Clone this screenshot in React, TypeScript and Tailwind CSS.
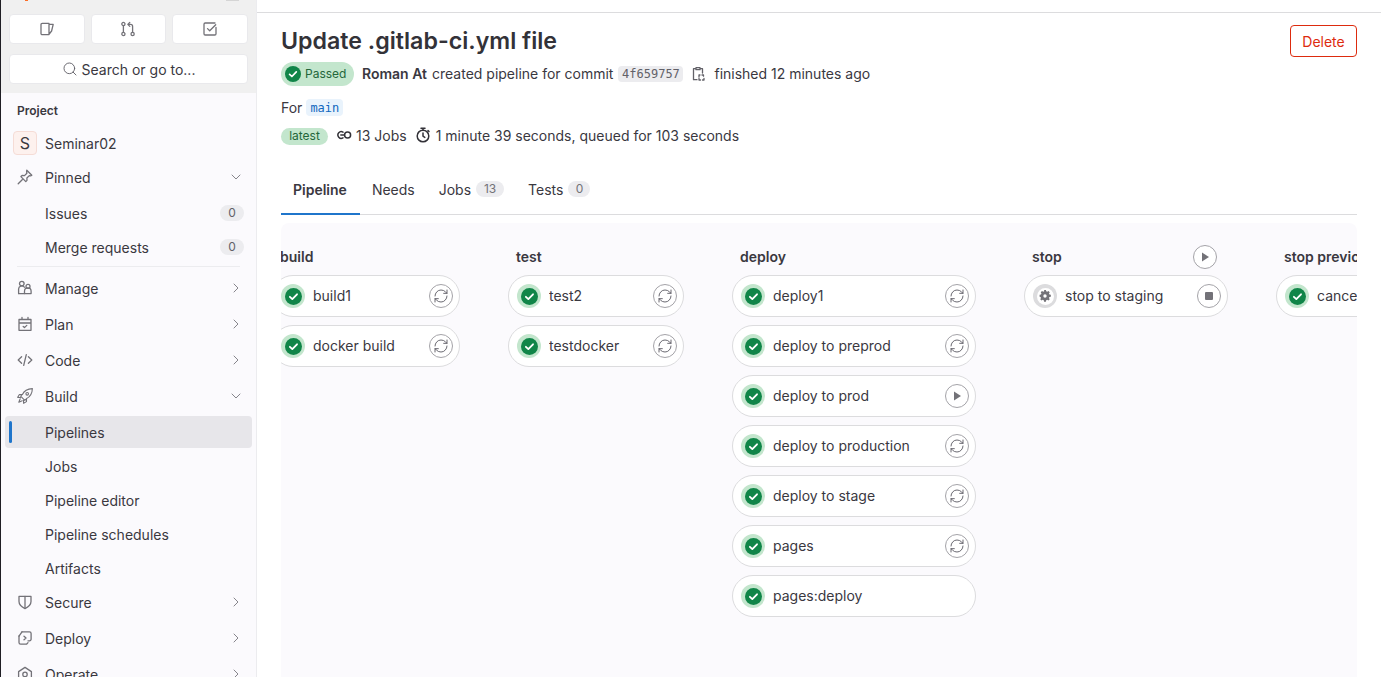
import { ReactNode } from "react";
import { ChevronDown, ChevronRight, RefreshCw, Search } from "lucide-react";

const Icon = ({ children, size = 16, className = "text-[#737278]" }: { children: ReactNode; size?: number; className?: string }) => (
  <svg width={size} height={size} viewBox="0 0 16 16" fill="none" stroke="currentColor" strokeWidth="1.3" strokeLinecap="round" strokeLinejoin="round" className={`shrink-0 ${className}`}>
    {children}
  </svg>
);

const StatusSuccess = ({ size = 17 }: { size?: number }) => (
  <svg width={size} height={size} viewBox="0 0 16 16" className="shrink-0">
    <circle cx="8" cy="8" r="8" fill="#108548" />
    <path d="M4.6 8.3l2.3 2.2 4.4-4.6" fill="none" stroke="#fff" strokeWidth="1.7" strokeLinecap="round" strokeLinejoin="round" />
  </svg>
);

const ActionButton = ({ kind }: { kind: "retry" | "play" | "stop" }) => (
  <button className="w-6 h-6 rounded-full border border-[#a4a3a8] bg-white flex items-center justify-center shrink-0 text-[#737278]">
    {kind === "retry" && <RefreshCw size={16} strokeWidth={1.4} className="text-[#5f5e66]" />}
    {kind === "play" && (
      <svg width="12" height="12" viewBox="0 0 12 12">
        <path d="M3 1.600v8.800L10 6z" fill="currentColor" />
      </svg>
    )}
    {kind === "stop" && <span className="w-2 h-2 rounded-[1px] bg-[#737278]" />}
  </button>
);

type Job = { name: string; action?: "retry" | "play" | "stop"; status?: "success" | "manual" };

const JobPill = ({ job }: { job: Job }) => (
  <div className="h-[42px] rounded-[21px] border border-[#dcdcde] bg-white flex items-center pl-2 pr-[6px]">
    {job.status === "manual" ? (
      <span className="w-6 h-6 rounded-full bg-[#dcdcde] flex items-center justify-center shrink-0">
        <span className="w-[17px] h-[17px] rounded-full bg-white flex items-center justify-center">
          <svg width="12" height="12" viewBox="0 0 12 12">
            <path d="M5 .8h2l.3 1.500 1.100.5 1.300-.8 1.400 1.400-.8 1.300.5 1.100 1.500.3v2l-1.500.3-.5 1.100.8 1.300-1.400 1.400-1.300-.8-1.100.5-.3 1.500H5l-.3-1.500-1.100-.5-1.300.8-1.400-1.400.8-1.300-.5-1.100L.2 8V6l1.500-.3.5-1.100-.8-1.300 1.400-1.400 1.300.8 1.100-.5z" transform="translate(.4 -.8) scale(.93)" fill="#737278" />
            <circle cx="6" cy="6" r="1.700" fill="#fff" />
          </svg>
        </span>
      </span>
    ) : (
      <span className="w-6 h-6 rounded-full bg-[#c3e6cd] flex items-center justify-center shrink-0">
        <StatusSuccess />
      </span>
    )}
    <span className="ml-2 pb-[2px] text-[14px] text-[#3a383f] whitespace-nowrap flex-1 overflow-hidden">{job.name}</span>
    {job.action && <ActionButton kind={job.action} />}
  </div>
);

const stages: { title: string; width: string; headAction?: boolean; jobs: Job[] }[] = [
  { title: "build", width: "w-[188px] -ml-[9px]", jobs: [{ name: "build1", action: "retry" }, { name: "docker build", action: "retry" }] },
  { title: "test", width: "w-[176px]", jobs: [{ name: "test2", action: "retry" }, { name: "testdocker", action: "retry" }] },
  {
    title: "deploy",
    width: "w-[244px]",
    jobs: [
      { name: "deploy1", action: "retry" },
      { name: "deploy to preprod", action: "retry" },
      { name: "deploy to prod", action: "play" },
      { name: "deploy to production", action: "retry" },
      { name: "deploy to stage", action: "retry" },
      { name: "pages", action: "retry" },
      { name: "pages:deploy" },
    ],
  },
  { title: "stop", width: "w-[204px]", headAction: true, jobs: [{ name: "stop to staging", action: "stop", status: "manual" }] },
  { title: "stop previous", width: "w-[204px]", jobs: [{ name: "cancel previous", action: "retry" }] },
];

const navIcons: Record<string, ReactNode> = {
  pin: (
    <Icon>
      <path d="M9.800 1.200l5 5-1.200.7-1.300-.3-2.400 2.400.1 2.400-1.200 1.200-4.900-5 1.200-1.100 2.400.1 2.400-2.400-.3-1.400zM5.200 10.800L1.200 14.800" />
    </Icon>
  ),
  manage: (
    <Icon>
      <circle cx="4.800" cy="3.600" r="2.300" />
      <path d="M1.600 13.600V9a3.200 3.200 0 0 1 5.800-1.800" />
      <path d="M1.600 13.600h5.900" />
      <circle cx="11" cy="6.400" r="2" />
      <path d="M7.500 13.600v-2.400a3.200 3.200 0 0 1 6.600 0v2.400z" />
    </Icon>
  ),
  plan: (
    <Icon>
      <path d="M2 3.500h12v10.800H2zM2 7h12M5 1.400v2M11 1.400v2" />
      <path d="M6.200 10.400l1.300 1.200 2.300-2.200" />
    </Icon>
  ),
  code: (
    <Icon>
      <path d="M4.600 4.800L1.200 8l3.400 3.200M11.400 4.800L14.800 8l-3.400 3.200M9.300 2.600L6.700 13.400" />
    </Icon>
  ),
  build: (
    <Icon>
      <path d="M15.400.6c-4.800.2-8.300 2.200-10 5.800L3.600 8.200l4.200 4.200 1.800-1.800c3.600-1.700 5.600-5.200 5.800-10z" strokeWidth="1.100" />
      <circle cx="10.200" cy="5.800" r="1.300" strokeWidth="1.100" />
      <path d="M5 6.500H2.400L.7 9.400l3 .1M9.500 11v2.600l-2.900 1.700-.1-3M3.200 10.800L1.800 14.200l3.400-1.400" strokeWidth="1.100" />
    </Icon>
  ),
  secure: (
    <Icon>
      <path d="M2 2.400h12v5.200c0 3-2.400 5.300-6 7-3.600-1.700-6-4-6-7z" />
      <path d="M8 2.400v12" />
    </Icon>
  ),
  deploy: (
    <Icon>
      <path d="M5 1.800h7.500a1.600 1.600 0 0 1 1.600 1.600v5.800a1.600 1.600 0 0 1-1.600 1.600H11M2 6v6.600a1.600 1.600 0 0 0 1.600 1.600h5.900l1.500-1.600" />
      <path d="M2 6.200L5 1.800M7 6.200L9 8l-2 1.800" />
    </Icon>
  ),
  operate: (
    <Icon>
      <path d="M8 1.400l6.400 4.200v8.600H1.600V5.600z" />
      <circle cx="8" cy="8.400" r="2.200" />
    </Icon>
  ),
};

const NavRow = ({ label, icon, open, closed }: { label: string; icon?: string; open?: boolean; closed?: boolean }) => (
  <div className="h-[34px] mx-1 flex items-center pl-3 pr-2">
    <span className="w-4 h-4 mr-3 shrink-0">{icon && navIcons[icon]}</span>
    <span className="flex-1 text-[14px] text-[#3a383f]">{label}</span>
    {open && <ChevronDown size={16} strokeWidth={1.3} className="text-[#737278]" />}
    {closed && <ChevronRight size={16} strokeWidth={1.3} className="text-[#737278]" />}
  </div>
);

const SubRow = ({ label, count }: { label: string; count?: number }) => (
  <div className="h-[34px] mx-1 flex items-center pl-10 pr-2">
    <span className="flex-1 text-[14px] text-[#3a383f]">{label}</span>
    {count !== undefined && <span className="w-6 h-4 rounded-full bg-[#ececef] flex items-center justify-center text-[12px] text-[#626168]">{count}</span>}
  </div>
);

const Sidebar = () => (
  <aside className="w-[256px] shrink-0 h-full bg-[#fbfafd] border-r border-[#ececef] overflow-hidden">
    <div className="relative h-[93px] bg-[#f0f0f0] px-2 pt-[14px]">
      <span className="absolute left-[24px] top-0 w-[3px] h-[1px] bg-[#fc6d26]" />
      <span className="absolute left-[225px] top-0 w-[13px] h-[1px] bg-[#d5d5d5]" />
      <div className="grid grid-cols-3 gap-[6px]">
        <button className="h-[30px] bg-white border border-[#e9e9ec] rounded flex items-center justify-center">
          <Icon>
            <path d="M2 3.600a1.200 1.200 0 0 1 1.200-1.200H10v11.200H3.200A1.200 1.200 0 0 1 2 12.400zM10 3.400h4.200L12.600 10 10 13.400" />
          </Icon>
        </button>
        <button className="h-[30px] bg-white border border-[#e9e9ec] rounded flex items-center justify-center">
          <Icon>
            <circle cx="3.400" cy="3" r="1.600" />
            <circle cx="3.400" cy="13" r="1.600" />
            <circle cx="12.600" cy="13" r="1.600" />
            <path d="M3.400 4.600v6.800M12.600 11.400V5.400a2 2 0 0 0-2-2H8M9.800 1.400L7.800 3.400l2 2" />
          </Icon>
        </button>
        <button className="h-[30px] bg-white border border-[#e9e9ec] rounded flex items-center justify-center">
          <Icon>
            <path d="M14 6.500v6.300a1.200 1.200 0 0 1-1.200 1.200H3.200A1.200 1.200 0 0 1 2 12.800V3.200A1.200 1.200 0 0 1 3.200 2H13" />
            <path d="M5.500 7.600l2.200 2.200 6-6" />
          </Icon>
        </button>
      </div>
      <button className="mt-[10px] w-full h-[30px] bg-white border border-[#e9e9ec] rounded flex items-center justify-center gap-1 text-[14px] text-[#3a383f]">
        <Search size={16} strokeWidth={1.4} className="text-[#626168]" />
        Search or go to...
      </button>
    </div>
    <div className="pt-[9px]">
      <div className="h-[18px] pl-4 flex items-center text-[12px] font-semibold text-[#3a383f]">Project</div>
      <div className="mt-[6px] h-[34px] mx-1 flex items-center pl-2">
        <span className="w-6 h-6 rounded bg-[#fdf1ee] border border-[#f5dcd6] flex items-center justify-center text-[16px] text-[#3a383f] mr-2">S</span>
        <span className="text-[14px] text-[#3a383f]">Seminar02</span>
      </div>
      <NavRow label="Pinned" icon="pin" open />
      <div className="mt-[2px]">
        <SubRow label="Issues" count={0} />
        <SubRow label="Merge requests" count={0} />
      </div>
      <div className="mx-4 mt-[2px] h-px bg-[#ececef]" />
      <div className="mt-1 flex flex-col gap-[2px]">
        <NavRow label="Manage" icon="manage" closed />
        <NavRow label="Plan" icon="plan" closed />
        <NavRow label="Code" icon="code" closed />
        <NavRow label="Build" icon="build" open />
      </div>
      <div className="relative mt-[3px] mb-[1px] h-8 mx-1 rounded bg-[#e7e6ea] flex items-center pl-10 text-[14px] text-[#3a383f]">
        <span className="absolute left-1 top-[5px] w-[3px] h-[22px] rounded bg-[#1f75cb]" />
        Pipelines
      </div>
      <SubRow label="Jobs" />
      <SubRow label="Pipeline editor" />
      <SubRow label="Pipeline schedules" />
      <SubRow label="Artifacts" />
      <div className="flex flex-col gap-[2px]">
        <NavRow label="Secure" icon="secure" closed />
        <NavRow label="Deploy" icon="deploy" closed />
        <NavRow label="Operate" icon="operate" closed />
      </div>
    </div>
  </aside>
);

const Tab = ({ label, count, countWidth, active }: { label: string; count?: number; countWidth?: string; active?: boolean }) => (
  <div className={`h-[49px] pl-3 flex items-center gap-[5px] text-[14px] text-[#3a383f] -mb-px ${active ? "pb-px pr-[13px] font-semibold border-b-2 border-[#1f75cb]" : "pb-[3px] pr-3"}`}>
    {label}
    {count !== undefined && <span className={`h-4 ${countWidth} rounded-full bg-[#ececef] flex items-center justify-center text-[12px] text-[#737278]`}>{count}</span>}
  </div>
);

export default function App() {
  return (
    <div className="w-[1381px] h-[677px] overflow-hidden flex bg-white [font-family:Inter,sans-serif]">
      <div className="w-px h-full bg-[#1f1e24] shrink-0" />
      <Sidebar />
      <main className="flex-1 min-w-0 h-full overflow-hidden pt-3">
        <div className="border-t border-[#dcdcde] px-6 pt-3">
          <div className="flex items-start justify-between h-8">
            <h1 className="pt-px text-[23.2px] leading-[30px] font-semibold text-[#333238]">Update .gitlab-ci.yml file</h1>
            <button className="h-8 w-[67px] rounded border border-[#dd2b0e] text-[14px] text-[#dd2b0e]">Delete</button>
          </div>
          <div className="mt-[5px] h-6 flex items-center text-[14px] text-[#3a383f]">
            <span className="h-6 pl-1 w-[73px] rounded-full bg-[#c3e6cd] flex items-center gap-1 text-[12px] text-[#24663b]">
              <StatusSuccess size={16} />
              Passed
            </span>
            <span className="ml-2 pb-[2px] font-semibold">Roman At</span>
            <span className="ml-[5px] pb-[2px]">created pipeline for commit</span>
            <span className="ml-[5px] h-4 w-[65px] rounded bg-[#ececef] flex items-center justify-center text-[12px] text-[#626168] [font-family:'DejaVu_Sans_Mono',monospace]">4f659757</span>
            <span className="ml-[7px] w-4 flex justify-center">
              <Icon className="text-[#626168]">
                <path d="M6 1.700h4v2H6zM6 2.700H3.500v11H7M10 2.700h2.500V7" />
                <path d="M9 9h1M12 9h1.500v1.200M14 12.500V14h-1.500M10.500 14H9v-1.500M9 11V9" />
              </Icon>
            </span>
            <span className="ml-2 pb-[2px]">finished 12 minutes ago</span>
          </div>
          <div className="mt-[12px] h-[18px] flex items-center text-[14px] text-[#3a383f]">
            For
            <span className="ml-[4px] mt-px h-[17px] px-1 rounded bg-[#e9f3fc] flex items-center text-[12px] text-[#1068bf] [font-family:'DejaVu_Sans_Mono',monospace]">main</span>
          </div>
          <div className="mt-[10px] h-[18px] flex items-center text-[14px] text-[#3a383f]">
            <span className="mt-[2px] h-[17px] w-[47px] rounded-full bg-[#c3e6cd] flex items-center justify-center text-[12px] text-[#24663b]">latest</span>
            <span className="ml-2">
              <Icon className="text-[#333238]">
                <path d="M7 5.200a3.300 3.300 0 1 0 0 5.600" strokeWidth="1.500" />
                <path d="M4.800 8h3.200" strokeWidth="1.500" />
                <circle cx="11.600" cy="8" r="3" strokeWidth="1.500" />
              </Icon>
            </span>
            <span className="ml-1">13 Jobs</span>
            <span className="ml-[8px]">
              <Icon className="text-[#333238]">
                <circle cx="8" cy="9" r="5.800" strokeWidth="1.500" />
                <path d="M6 1.200h4M8 1.200v2M8 6v3.200l1.800 1.200M13 3.500l1 1" strokeWidth="1.500" />
              </Icon>
            </span>
            <span className="ml-[5px]">1 minute 39 seconds, queued for 103 seconds</span>
          </div>
          <div className="mt-[22px] flex border-b border-[#dcdcde]">
            <Tab label="Pipeline" active />
            <Tab label="Needs" />
            <Tab label="Jobs" count={13} countWidth="w-[28px]" />
            <Tab label="Tests" count={0} countWidth="w-[22px]" />
          </div>
          <div className="mt-2 h-[500px] rounded-t-lg bg-[#fbfafd] overflow-hidden pt-[22px] flex gap-12">
            {stages.map((stage) => (
              <div key={stage.title} className={`${stage.width} shrink-0`}>
                <div className="h-6 pl-2 pr-[11px] flex items-center justify-between text-[14px] font-semibold text-[#3a383f] whitespace-nowrap">
                  <span className="pb-[2px]">{stage.title}</span>
                  {stage.headAction && <ActionButton kind="play" />}
                </div>
                <div className="mt-[6px] flex flex-col gap-2">
                  {stage.jobs.map((job) => (
                    <JobPill key={job.name} job={job} />
                  ))}
                </div>
              </div>
            ))}
          </div>
        </div>
      </main>
    </div>
  );
}
